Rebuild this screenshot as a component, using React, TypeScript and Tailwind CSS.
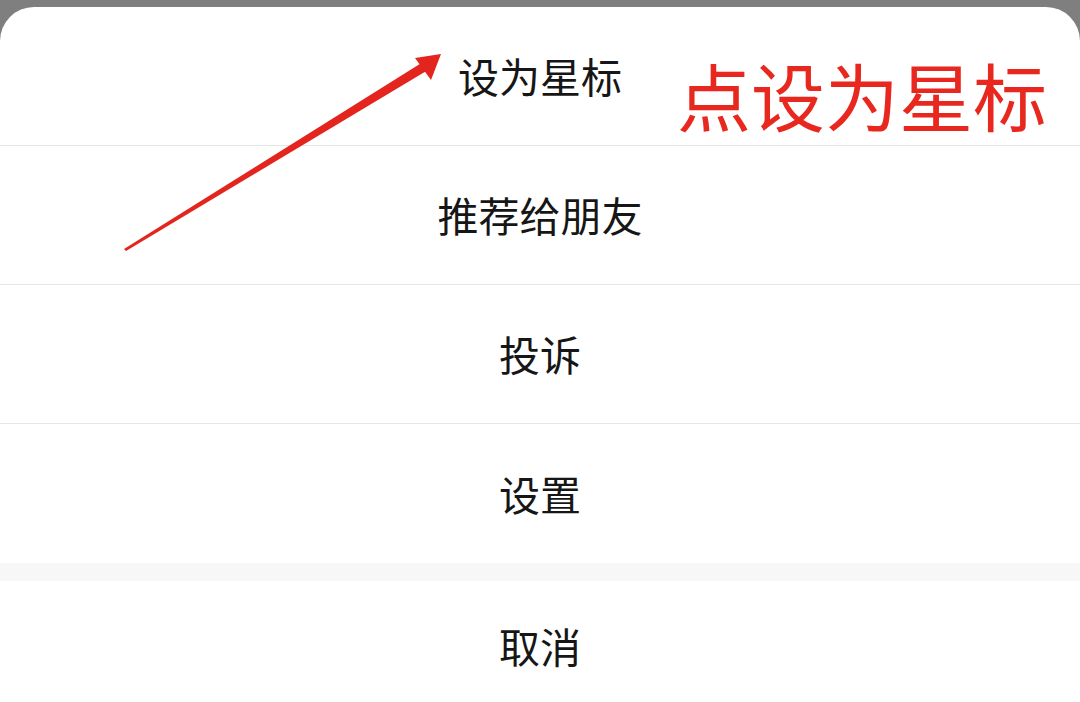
import React from 'react';

const items = ['设为星标', '推荐给朋友', '投诉', '设置'];

function Arrow() {
  // tapered red arrow, thin at the tail, thick near the head
  return (
    <svg
      className="absolute left-0 top-0 pointer-events-none"
      width="1080"
      height="300"
      viewBox="0 0 1080 300"
    >
      <polygon points="124,249 126,251 428,70 423,62" fill="#e3251d" />
      <polygon points="441,54 415,58 431,80" fill="#e3251d" />
    </svg>
  );
}

export default function App() {
  return (
    <div
      className="w-[1080px] h-[702px] overflow-hidden bg-[#7f7f7f] pt-[7px] relative"
      style={{ fontFamily: '"Noto Sans CJK SC", "Noto Sans", sans-serif' }}
    >
      <div className="bg-white rounded-t-[34px] h-full flex flex-col">
        {items.map((t, i) => (
          <div
            key={t}
            className={`h-[139px] shrink-0 flex items-center justify-center text-[41px] text-[#161616] ${
              i < items.length - 1 ? 'border-b border-[#e6e6e6]' : ''
            }`}
          >
            {t}
          </div>
        ))}
        <div className="h-[18px] shrink-0 bg-[#f7f7f7]" />
        <div className="h-[130px] shrink-0 flex items-center justify-center text-[41px] text-[#161616]">
          取消
        </div>
      </div>

      <div className="absolute left-[677px] top-[57px] text-[74px] leading-none text-[#e8281f]">
        点设为星标
      </div>
      <Arrow />
    </div>
  );
}
